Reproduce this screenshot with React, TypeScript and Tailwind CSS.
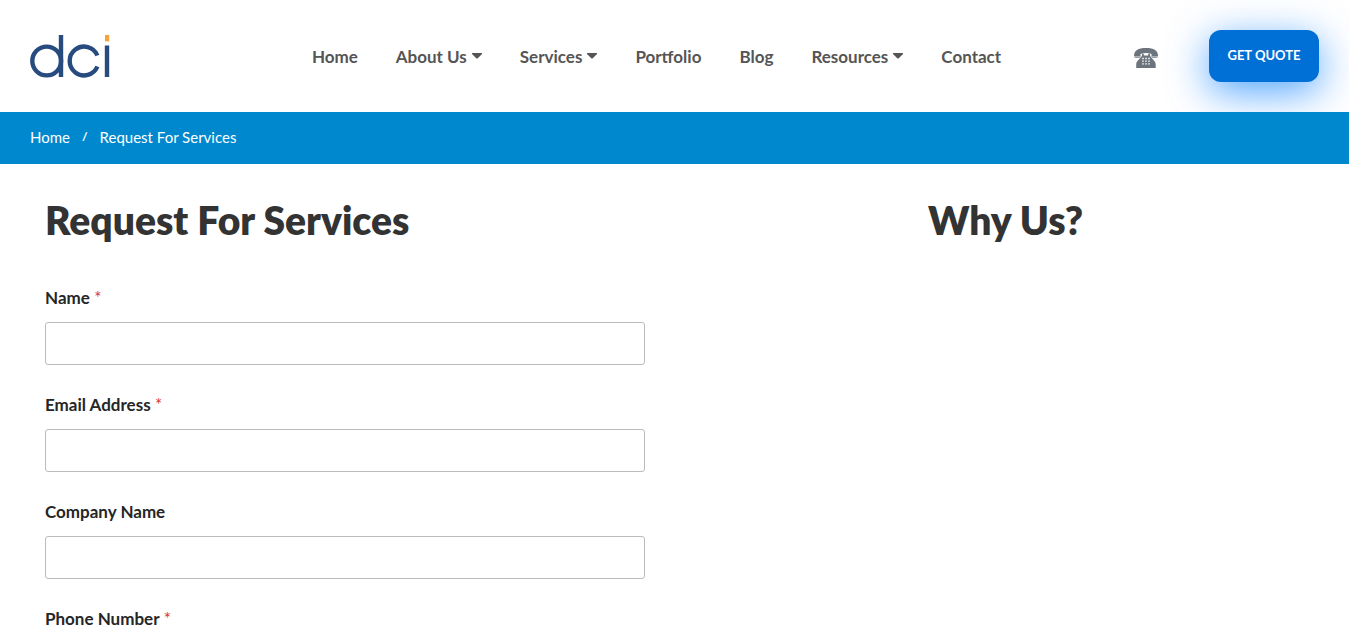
import React from "react";

type NavItem = { label: string; menu?: boolean };

const navItems: NavItem[] = [
  { label: "Home" },
  { label: "About Us", menu: true },
  { label: "Services", menu: true },
  { label: "Portfolio" },
  { label: "Blog" },
  { label: "Resources", menu: true },
  { label: "Contact" },
];

const fields = [
  { id: "name", label: "Name", type: "text", required: true },
  { id: "email", label: "Email Address", type: "email", required: true },
  { id: "company", label: "Company Name", type: "text", required: false },
  { id: "phone", label: "Phone Number", type: "tel", required: true },
];

function Logo() {
  return (
    <svg viewBox="0 0 80 43" className="h-[43px] w-20" role="img" aria-label="dci">
      <g fill="none" stroke="#274b7f" strokeWidth="4.4">
        <circle cx="16.7" cy="26" r="14.4" />
        <path d="M31 0V42" />
        <path d="M67.400 20.500A14.400 14.400 0 1 0 67.400 31.500" />
        <path d="M77 10.500V42" />
      </g>
      <path d="M75 0h4.200v6.400H75z" fill="#f9a13a" />
    </svg>
  );
}

function Caret() {
  return (
    <svg viewBox="0 0 10 6" className="mb-0.5 h-[6px] w-[10px] shrink-0" aria-hidden="true">
      <path d="M0 0h10v1L5.500 5.600h-1L0 1z" fill="currentColor" />
    </svg>
  );
}

function Telephone() {
  return (
    <svg viewBox="0 0 24 20" className="h-5 w-6" aria-hidden="true">
      <path
        d="M0 8C0 2.500 4 0 12 0s12 2.500 12 8q0 1.800-1.500 1.800h-3.600Q17.500 9.800 17.500 8.500V6Q12 4 6.500 6v2.500Q6.500 9.800 5.100 9.800H1.500Q0 9.800 0 8z"
        fill="#6c757d"
      />
      <path d="M0 8.600h6M18 8.600h6" stroke="#fff" strokeWidth=".7" opacity=".7" />
      <path
        d="M8 5.800h1.800v1.700h4.400V5.800H16v1.700c1 3 5.700 5 5.700 9V20H2.200v-3.500c0-4 4.800-6 5.800-9z"
        fill="#6c757d"
      />
      <path
        d="M8 10.500h2m1 0h2m1 0h2M8 13.200h2m1 0h2m1 0h2M8 15.900h2m1 0h2m1 0h2"
        stroke="#fff"
        strokeWidth="1.300"
        opacity=".75"
      />
    </svg>
  );
}

export default function App() {
  return (
    <div className="bg-white pr-[17px] font-['Lato','Open_Sans',sans-serif] text-[#333333]">
      <header className="grid h-28 grid-cols-[282fr_auto_318fr] items-center overflow-hidden px-[30px]">
        <a href="#home" className="w-20">
          <Logo />
        </a>
        <nav aria-label="Main" className="pt-0.5">
          <ul className="flex items-center gap-[38px]">
            {navItems.map((item) => (
              <li key={item.label}>
                <a
                  href="#"
                  className="flex items-center gap-[5px] text-[17px] leading-6 font-bold whitespace-nowrap text-[#555555]"
                >
                  {item.label}
                  {item.menu && <Caret />}
                </a>
              </li>
            ))}
          </ul>
        </nav>
        <div className="flex items-center justify-end gap-[51px]">
          <a href="#call" aria-label="Call us" className="pt-1">
            <Telephone />
          </a>
          <button
            type="button"
            className="h-[52px] w-[110px] rounded-xl bg-[#0070d6] text-[13px] font-bold whitespace-nowrap text-white shadow-[0_10px_40px_0_#007bffb0]"
          >
            GET QUOTE
          </button>
        </div>
      </header>

      <nav aria-label="Breadcrumb" className="flex h-13 items-center bg-[#0088ce] px-[30px] pb-0.5 text-white">
        <ol className="flex items-center gap-3 text-[15px] leading-6">
          <li>
            <a href="#home">Home</a>
          </li>
          <li aria-hidden="true" className="text-xs font-bold">
            /
          </li>
          <li aria-current="page">Request For Services</li>
        </ol>
      </nav>

      <main className="grid grid-cols-[883fr_376fr] px-[45px] pt-8 pb-8">
        <section>
          <h1 className="text-[39px] leading-[48px] font-extrabold">Request For Services</h1>
          <form className="mt-[42px] flex max-w-[600px] flex-col gap-7">
            {fields.map((field) => (
              <div key={field.id} className="flex flex-col gap-3">
                <label htmlFor={field.id} className="text-[17px] leading-6 font-bold text-[#262626]">
                  {field.label}
                  {field.required && <span className="font-normal text-[#d63637]"> *</span>}
                </label>
                <input
                  id={field.id}
                  type={field.type}
                  required={field.required}
                  className="h-[43px] w-full rounded-[3px] border border-[#bbbbbb] bg-white px-3 text-base"
                />
              </div>
            ))}
          </form>
        </section>
        <aside>
          <h2 className="text-[39px] leading-[48px] font-extrabold">Why Us?</h2>
        </aside>
      </main>
    </div>
  );
}
